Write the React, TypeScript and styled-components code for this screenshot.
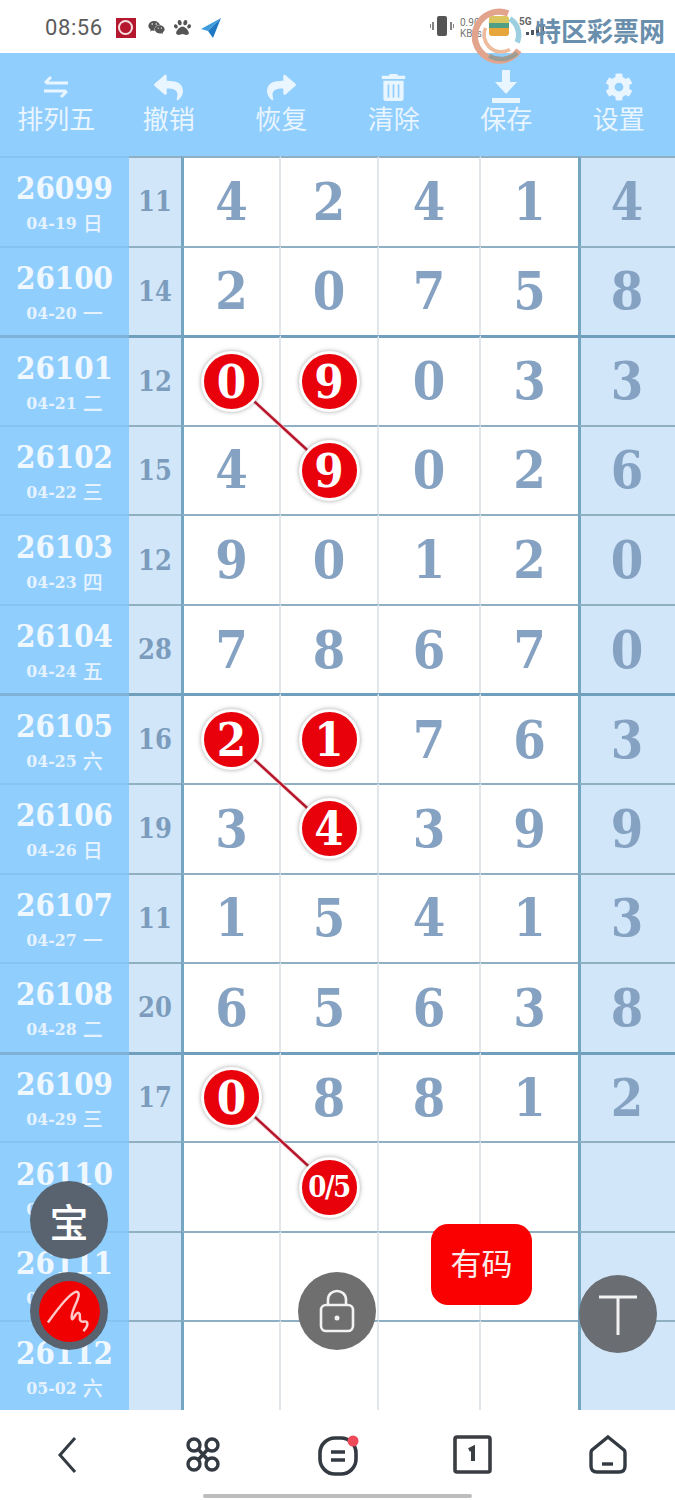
import { createGlobalStyle, styled } from "styled-components";
import { FaCog, FaReply, FaShare, FaTrashAlt, FaWeixin, FaPaw } from "react-icons/fa";

const GlobalStyle = createGlobalStyle`
  html, body {
    margin: 0;
    padding: 0;
    background: #fff;
  }
  * {
    box-sizing: border-box;
  }
`;

const SERIF = `"DejaVu Serif Condensed", "DejaVu Serif", "Noto Sans CJK SC", serif`;
const SANS = `"Noto Sans CJK SC", "Noto Sans", sans-serif`;

const Page = styled.div`
  position: relative;
  width: 675px;
  height: 1500px;
  overflow: hidden;
  display: flex;
  flex-direction: column;
  background: #fff;
`;

const StatusBar = styled.div`
  height: 53px;
  flex: none;
  display: flex;
  align-items: center;
  padding: 2px 10px 0 45px;
  gap: 12px;
  background: #fff;
`;

const Clock = styled.span`
  font: 400 22px Roboto, sans-serif;
  color: #5c5c5c;
  letter-spacing: 0.6px;
  margin-right: 1px;
`;

const BankIcon = styled.span`
  width: 20px;
  height: 20px;
  background: #b5182e;
  display: flex;
  align-items: center;
  justify-content: center;
  &::after {
    content: "";
    width: 11px;
    height: 11px;
    border: 2px solid #f6dfe2;
    border-radius: 50%;
  }
`;

const NotifyIcons = styled.div`
  display: flex;
  align-items: center;
  gap: 9px;
  color: #555;
  font-size: 17px;
  flex: 1;
`;

const VibrateIcon = styled.svg`
  position: absolute;
  left: 430px;
  top: 14px;
`;

const NetRate = styled.div`
  position: absolute;
  left: 460px;
  top: 17px;
  font: 400 10px/11px Roboto, sans-serif;
  color: #777;
`;

const SimBox = styled.span`
  position: absolute;
  left: 489px;
  top: 16px;
  width: 20px;
  height: 20px;
  border-radius: 3px;
  background: linear-gradient(#d9c65f 0 35%, #4f9f86 35% 60%, #e6a63c 60%);
`;

const FiveG = styled.span`
  position: absolute;
  left: 519px;
  top: 16px;
  font: 700 10px Roboto, sans-serif;
  color: #666;
`;

const SignalIcon = styled.svg`
  position: absolute;
  left: 526px;
  top: 24px;
`;

const Watermark = styled.div`
  position: absolute;
  left: 535px;
  top: 15px;
  font: 700 26px/30px ${SANS};
  color: #6a8fac;
  white-space: nowrap;
`;

const LogoSpot = styled.svg`
  position: absolute;
  left: 472px;
  top: 8px;
`;

const Toolbar = styled.div`
  height: 103px;
  flex: none;
  display: grid;
  grid-template-columns: repeat(6, 1fr);
  background: #90cefe;
`;

const ToolButton = styled.div`
  display: flex;
  flex-direction: column;
  align-items: center;
  padding-top: 19px;
  color: #e9f5ff;
  font-size: 27px;
`;

const ToolIcon = styled.span`
  height: 30px;
  display: flex;
  align-items: center;
  justify-content: center;
`;

const ToolLabel = styled.span`
  font: 400 26px/32px ${SANS};
`;

const Table = styled.div`
  position: relative;
  flex: 1;
  display: grid;
  grid-template-rows: repeat(14, 1fr);
  background: #fff;
`;

const Row = styled.div`
  display: grid;
  grid-template-columns: 129px 52px 100px 98px 102px 97px 97px;
`;

const Cell = styled.div<{ $thick: boolean; $divider?: boolean; $light?: boolean }>`
  display: flex;
  align-items: center;
  justify-content: center;
  border-top: ${(p) => (p.$thick ? "3px solid #6f9fbc" : "2px solid #8fb0c2")};
  border-left: ${(p) => (p.$divider ? "3px solid #74a5c1" : "none")};
  border-right: ${(p) => (p.$light ? "2px solid #e0e6ea" : "none")};
  font: 700 52px/1 ${SERIF};
  color: #86a2c2;
`;

const IssueCell = styled.div<{ $thick: boolean }>`
  display: flex;
  flex-direction: column;
  align-items: center;
  justify-content: center;
  gap: 7px;
  background: #90cefe;
  border-top: ${(p) => (p.$thick ? "3px solid #7fb2d6" : "2px solid #86c3f2")};
  color: #f0f8ff;
`;

const Issue = styled.span`
  font: 700 31px/36px ${SERIF};
`;

const DateLine = styled.span`
  font: 700 17.5px/20px ${SERIF};
  color: #e6f3ff;
  display: flex;
  gap: 6px;
`;

const Weekday = styled.span`
  font: 500 20px/20px ${SANS};
`;

const SumCell = styled(Cell)`
  background: #d2e6fa;
  font-size: 27px;
  color: #7b9cbc;
`;

const TailCell = styled(Cell)`
  background: #d2e6fa;
  padding-right: 2px;
`;

const Ball = styled.span<{ $small?: boolean }>`
  position: relative;
  z-index: 2;
  width: 61px;
  height: 61px;
  border-radius: 50%;
  background: #e8000b;
  border: 3px solid #fdfdfd;
  box-shadow: 0 0 4px rgba(90, 90, 90, 0.55);
  display: flex;
  align-items: center;
  justify-content: center;
  color: #fff;
  font: 700 ${(p) => (p.$small ? "29px" : "47px")}/1 ${SERIF};
  letter-spacing: ${(p) => (p.$small ? "-1.5px" : "0")};
`;

const Links = styled.svg`
  position: absolute;
  left: 0;
  top: 0;
  z-index: 1;
`;

const BottomNav = styled.div`
  height: 90px;
  flex: none;
  position: relative;
  display: grid;
  grid-template-columns: repeat(5, 135px);
  justify-items: center;
  align-items: start;
  padding-top: 23px;
  background: #fff;
`;

const HomeBar = styled.div`
  position: absolute;
  left: 203px;
  bottom: 2px;
  width: 269px;
  height: 4px;
  border-radius: 2px;
  background: #bdbdbd;
`;

const FloatCircle = styled.div<{ $x: number; $y: number; $bg: string }>`
  position: absolute;
  left: ${(p) => p.$x - 39}px;
  top: ${(p) => p.$y - 39}px;
  width: 78px;
  height: 78px;
  border-radius: 50%;
  background: ${(p) => p.$bg};
  z-index: 3;
  display: flex;
  align-items: center;
  justify-content: center;
  color: #fff;
`;

const FloatText = styled.span`
  font: 500 39px/1 ${SANS};
`;

const RedDisc = styled.div`
  width: 61px;
  height: 61px;
  border-radius: 50%;
  background: #f00000;
  display: flex;
  align-items: center;
  justify-content: center;
`;

const HasCode = styled.div`
  position: absolute;
  left: 431px;
  top: 1224px;
  width: 101px;
  height: 81px;
  border-radius: 17px;
  background: #fb0000;
  color: #fbeaea;
  font: 400 31px/1 ${SANS};
  display: flex;
  align-items: center;
  justify-content: center;
  padding-bottom: 6px;
  z-index: 3;
`;

const rows = [
  { id: "26099", date: "04-19", day: "日", sum: "11", n: ["4", "2", "4", "1", "4"] },
  { id: "26100", date: "04-20", day: "一", sum: "14", n: ["2", "0", "7", "5", "8"] },
  { id: "26101", date: "04-21", day: "二", sum: "12", n: ["0", "9", "0", "3", "3"], hit: [0, 1], thick: true },
  { id: "26102", date: "04-22", day: "三", sum: "15", n: ["4", "9", "0", "2", "6"], hit: [1] },
  { id: "26103", date: "04-23", day: "四", sum: "12", n: ["9", "0", "1", "2", "0"] },
  { id: "26104", date: "04-24", day: "五", sum: "28", n: ["7", "8", "6", "7", "0"] },
  { id: "26105", date: "04-25", day: "六", sum: "16", n: ["2", "1", "7", "6", "3"], hit: [0, 1], thick: true },
  { id: "26106", date: "04-26", day: "日", sum: "19", n: ["3", "4", "3", "9", "9"], hit: [1] },
  { id: "26107", date: "04-27", day: "一", sum: "11", n: ["1", "5", "4", "1", "3"] },
  { id: "26108", date: "04-28", day: "二", sum: "20", n: ["6", "5", "6", "3", "8"] },
  { id: "26109", date: "04-29", day: "三", sum: "17", n: ["0", "8", "8", "1", "2"], hit: [0], thick: true },
  { id: "26110", date: "04-30", day: "四", sum: "", n: ["", "0/5", "", "", ""], hit: [1] },
  { id: "26111", date: "05-01", day: "五", sum: "", n: ["", "", "", "", ""] },
  { id: "26112", date: "05-02", day: "六", sum: "", n: ["", "", "", "", ""] },
];

const tools = [
  {
    label: "排列五",
    icon: (
      <svg width="30" height="26" viewBox="0 0 30 26" fill="none" stroke="currentColor" strokeWidth="3">
        <path d="M27 9H5M10 3 4 9" />
        <path d="M3 17h22M20 23l6-6" />
      </svg>
    ),
  },
  { label: "撤销", icon: <FaReply size={29} /> },
  { label: "恢复", icon: <FaShare size={29} /> },
  { label: "清除", icon: <FaTrashAlt size={27} /> },
  {
    label: "保存",
    icon: (
      <svg width="32" height="34" viewBox="0 0 32 34" fill="currentColor">
        <path d="M12 0h8v12h7L16 24 5 12h7z" />
        <rect x="2" y="28" width="28" height="5" />
      </svg>
    ),
  },
  { label: "设置", icon: <FaCog size={28} /> },
];

export default function App() {
  return (
    <Page>
      <GlobalStyle />
      <StatusBar>
        <Clock>08:56</Clock>
        <BankIcon />
        <NotifyIcons>
          <FaWeixin />
          <FaPaw />
          <svg width="22" height="24" viewBox="0 0 22 24">
            <path d="M21 2 1 13l7 2z" fill="#3f9bdc" />
            <path d="M21 2 8 15l5 7z" fill="#1f78c4" />
          </svg>
        </NotifyIcons>
      </StatusBar>
      <VibrateIcon width="24" height="24" viewBox="0 0 24 24">
        <rect x="7" y="2" width="10" height="20" rx="2" fill="#555" />
        <path d="M3 8v8M21 8v8M0 10v4M24 10v4" stroke="#666" strokeWidth="1.6" />
      </VibrateIcon>
      <NetRate>
        0.90
        <br />
        KB/s
      </NetRate>
      <SimBox />
      <FiveG>5G</FiveG>
      <SignalIcon width="18" height="12" viewBox="0 0 18 12" fill="#4a5560">
        <rect x="0" y="8" width="3" height="3" />
        <rect x="5" y="6" width="3" height="5" />
        <rect x="10" y="3" width="3" height="8" />
        <rect x="15" y="0" width="3" height="11" />
      </SignalIcon>
      <LogoSpot width="56" height="56" viewBox="0 0 62 62" fill="none">
        <path d="M40 6A27 27 0 1 0 52 47" stroke="#e2a48d" strokeWidth="7" />
        <path d="M19 53A27 27 0 0 0 50 50" stroke="#9c9c94" strokeWidth="5" />
        <path d="M42 12A21 21 0 0 1 50 38" stroke="#9ccfe0" strokeWidth="6" />
        <path d="M42 46A19 19 0 0 1 15 22" stroke="#efbb9d" strokeWidth="4" />
      </LogoSpot>
      <Watermark>特区彩票网</Watermark>

      <Toolbar>
        {tools.map((tool) => (
          <ToolButton key={tool.label}>
            <ToolIcon>{tool.icon}</ToolIcon>
            <ToolLabel>{tool.label}</ToolLabel>
          </ToolButton>
        ))}
      </Toolbar>

      <Table>
        <Links width="675" height="1254" viewBox="0 0 675 1254">
          {[225, 583, 940].map((y) => (
            <g key={y}>
              <line x1="232" y1={y} x2="329" y2={y + 89} stroke="#f4d5d5" strokeWidth="4" />
              <line x1="232" y1={y} x2="329" y2={y + 89} stroke="#b5142a" strokeWidth="2.4" />
            </g>
          ))}
        </Links>
        {rows.map((row) => {
          const thick = !!row.thick;
          return (
            <Row key={row.id}>
              <IssueCell $thick={thick}>
                <Issue>{row.id}</Issue>
                <DateLine>
                  {row.date}
                  <Weekday>{row.day}</Weekday>
                </DateLine>
              </IssueCell>
              <SumCell $thick={thick}>{row.sum}</SumCell>
              {row.n.map((value, i) => {
                const content = row.hit?.includes(i) ? (
                  <Ball $small={value.length > 1}>{value}</Ball>
                ) : (
                  value
                );
                if (i === 4) {
                  return (
                    <TailCell key={i} $thick={thick} $divider>
                      {content}
                    </TailCell>
                  );
                }
                return (
                  <Cell key={i} $thick={thick} $divider={i === 0} $light={i < 3}>
                    {content}
                  </Cell>
                );
              })}
            </Row>
          );
        })}
      </Table>

      <BottomNav>
        <svg width="44" height="44" viewBox="0 0 44 44" fill="none" stroke="#333a42" strokeWidth="3">
          <path d="M29 5 14 22l15 17" />
        </svg>
        <svg width="44" height="44" viewBox="0 0 44 44" fill="none" stroke="#333a42" strokeWidth="3.4">
          <circle cx="13" cy="12" r="6" />
          <circle cx="31" cy="12" r="6" />
          <circle cx="13" cy="31" r="6" />
          <circle cx="31" cy="31" r="6" />
          <path d="M17 16 27 27M27 16 17 27" />
        </svg>
        <svg width="48" height="48" viewBox="0 0 48 48" fill="none">
          <rect x="6" y="5" width="36" height="36" rx="15" stroke="#333a42" strokeWidth="3.6" />
          <path d="M17 19h14M17 27h14" stroke="#333a42" strokeWidth="3.6" />
          <circle cx="39" cy="8" r="5.5" fill="#ef4a5a" />
        </svg>
        <svg width="44" height="44" viewBox="0 0 44 44" fill="none">
          <rect x="4" y="4" width="35" height="35" rx="2" stroke="#3a3d42" strokeWidth="3.6" />
          <path d="M18 17l4-2v13" stroke="#3a3d42" strokeWidth="4" />
        </svg>
        <svg width="44" height="44" viewBox="0 0 44 44" fill="none" stroke="#333a42" strokeWidth="3.4">
          <path d="M22 4 38 17c1 1 1 2 1 3v13c0 4-2 6-6 6H11c-4 0-6-2-6-6V20c0-1 0-2 1-3z" />
          <path d="M16 31h11" />
        </svg>
        <HomeBar />
      </BottomNav>

      <FloatCircle $x={69} $y={1220} $bg="#58636f">
        <FloatText>宝</FloatText>
      </FloatCircle>
      <FloatCircle $x={69} $y={1311} $bg="#58636f">
        <RedDisc>
          <svg width="46" height="46" viewBox="0 0 48 48" fill="none" stroke="#ffc9c9" strokeWidth="2.6">
            <path d="M2 36C12 22 24 6 31 4c6-1 2 9-1 15-2 5-4 9-3 13 1 3 4-7 7-6 3 1 0 6 2 8 2 3 6-1 7 2 1 4-2 7-4 9" />
          </svg>
        </RedDisc>
      </FloatCircle>
      <FloatCircle $x={337} $y={1311} $bg="#6f6f6f">
        <svg width="40" height="46" viewBox="0 0 40 46" fill="none" stroke="#f2f2f2" strokeWidth="2.6">
          <rect x="4" y="17" width="32" height="26" rx="5" />
          <path d="M11 17v-5c0-12 18-12 18 0v5" />
          <circle cx="20" cy="30" r="2.5" fill="#f2f2f2" stroke="none" />
        </svg>
      </FloatCircle>
      <HasCode>有码</HasCode>
      <FloatCircle $x={618} $y={1314} $bg="#6a6d72">
        <svg width="44" height="46" viewBox="0 0 44 46" fill="none" stroke="#f2f2f2" strokeWidth="3">
          <path d="M3 6h38M22 6v38" />
        </svg>
      </FloatCircle>
    </Page>
  );
}
